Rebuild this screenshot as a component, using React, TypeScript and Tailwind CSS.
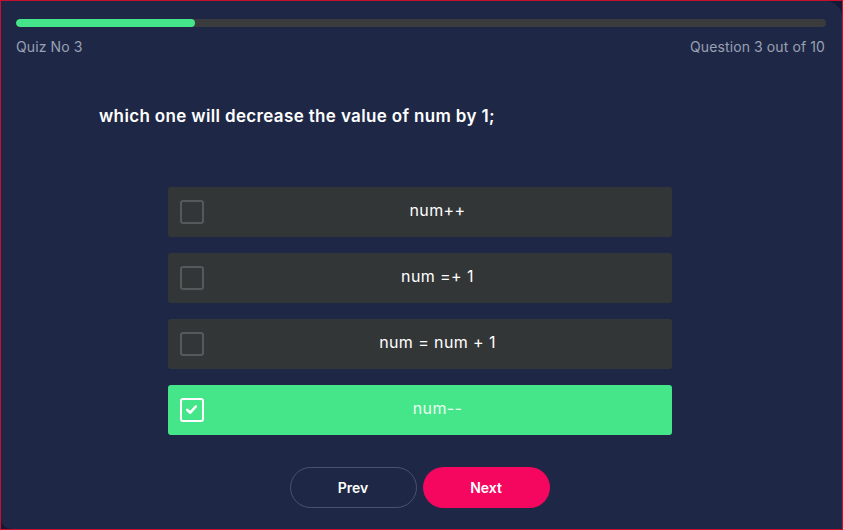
import React from "react";

const options = ["num++", "num =+ 1", "num = num + 1", "num--"];

function Box({ checked }: { checked: boolean }) {
  if (checked) {
    return (
      <div className="w-6 h-6 rounded-[3px] border-2 border-white flex items-center justify-center shrink-0">
        <svg width="15" height="15" viewBox="0 0 14 14" fill="none">
          <path d="M3 7.3 L5.8 10 L11 4.2" stroke="white" strokeWidth="2.4" strokeLinecap="round" strokeLinejoin="round" />
        </svg>
      </div>
    );
  }
  return <div className="w-6 h-6 rounded-[3px] border-2 border-[#56595b] shrink-0" />;
}

export default function App() {
  return (
    <div className="w-[843px] h-[530px] border border-[#c8102e] bg-[#141a36] overflow-hidden" style={{ fontFamily: "Inter, 'Open Sans', sans-serif" }}>
      <div className="w-full h-full bg-[#1e2846] rounded-tr-[16px] rounded-bl-[10px] pl-[15px] pr-[16px] pt-[18px] flex flex-col">
        <div className="h-2 w-full rounded-full bg-[#393b3c] overflow-hidden">
          <div className="h-full w-[179px] rounded-full bg-[#45e589]" />
        </div>
        <div className="flex justify-between mt-[9px] text-[14px] text-[#9aa0b3] tracking-[0.1px] pr-[1px]">
          <span>Quiz No 3</span>
          <span>Question 3 out of 10</span>
        </div>
        <div className="mt-[47px] pl-[83px] text-[17px] font-semibold text-white tracking-[0.35px]">
          which one will decrease the value of num by 1;
        </div>
        <div className="mt-[57px] flex flex-col gap-4 items-center pr-[3px]">
          {options.map((o, i) => {
            const sel = i === 3;
            return (
              <div
                key={o}
                className={`w-[504px] h-[50px] rounded-[3px] flex items-center pl-3 ${sel ? "bg-[#45e68a]" : "bg-[#333637]"}`}
              >
                <Box checked={sel} />
                <div className={`flex-1 text-center text-[16px] tracking-[0.4px] pb-[3px] ${sel ? "text-[#eafff2]" : "text-white"}`}>{o}</div>
              </div>
            );
          })}
        </div>
        <div className="mt-[32px] flex justify-center gap-[6px] pr-[3px]">
          <button className="w-[127px] h-[41px] rounded-full border border-[#4a5272] text-white text-[14px] font-semibold">Prev</button>
          <button className="w-[127px] h-[41px] rounded-full bg-[#f5065f] text-white text-[14px] font-semibold">Next</button>
        </div>
      </div>
    </div>
  );
}
